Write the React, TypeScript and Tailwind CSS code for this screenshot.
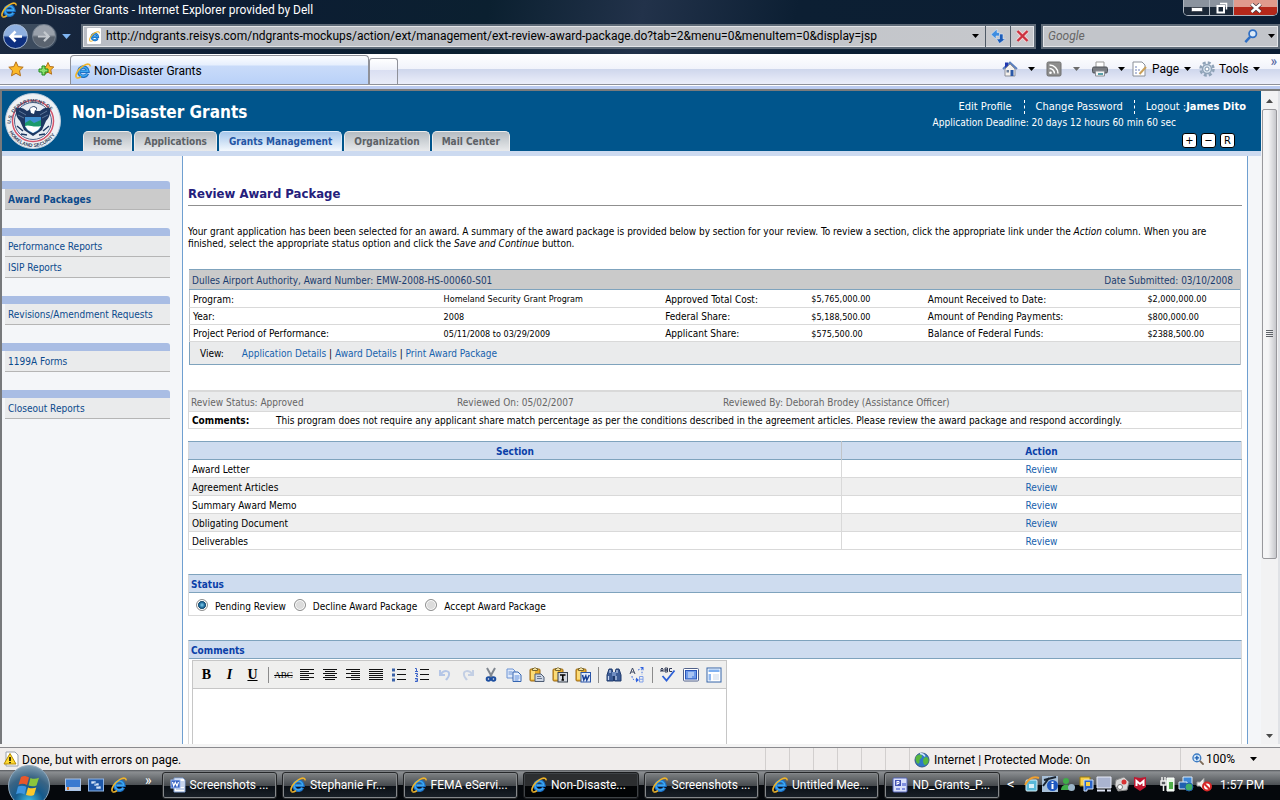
import React, { useState } from "react";

interface IconProps {
  size?: number;
  children: React.ReactNode;
}

const Icon: React.FC<IconProps> = ({ size = 16, children }) => (
  <svg width={size} height={size} viewBox="0 0 16 16" fill="none" className="shrink-0" aria-hidden="true">
    {children}
  </svg>
);

const IeLogo: React.FC<{ size?: number }> = ({ size = 16 }) => (
  <Icon size={size}>
    <path d="M12.6 10.6A4.6 4.6 0 1 1 13 8.4H5.4" stroke="#1b6fc4" strokeWidth="3.4" />
    <path d="M12.2 10.8A4.4 4.4 0 1 1 12.8 8.3H5.4" stroke="#3fa9f0" strokeWidth="1.4" />
    <path d="M1.6 14.6C-.6 12.4 3.2 5.6 8.6 2.6c4-2.2 6.8-1.8 6.4.8" stroke="#f0b429" strokeWidth="1.6" />
    <path d="M1.6 14.8c1.4.8 3-.2 4.4-1.2" stroke="#f0b429" strokeWidth="1.4" />
  </Icon>
);

const Caret: React.FC<{ className?: string }> = ({ className = "text-black" }) => (
  <svg width="7" height="4" viewBox="0 0 7 4" className={"shrink-0 " + className} aria-hidden="true">
    <path d="M0 0h7L3.500 4z" fill="currentColor" />
  </svg>
);

const Seal = () => (
  <svg width="58" height="58" viewBox="0 0 58 58" className="shrink-0" role="img" aria-label="Seal">
    <defs>
      <path id="sealTop" d="M6.500 33A22.500 22.500 0 1 1 51.500 33" />
      <path id="sealBottom" d="M3.500 34A26 26 0 0 0 54.500 34" />
    </defs>
    <circle cx="29" cy="29" r="27.500" fill="#eef1f5" stroke="#b9cadb" />
    <circle cx="29" cy="29" r="20.500" fill="#fff" stroke="#d2546a" strokeWidth="1.500" />
    <circle cx="29" cy="29" r="18.500" fill="#e8edf3" stroke="#4a648c" />
    <path d="M12 16c4-1 8 0 11 3l2-1c1-4 6-5 8-2v3l3 0c3-3 6-4 10-3 1 5-1 10-4 13l-4 9-9 6-9-6-4-9c-3-3-5-8-4-13z" fill="#1d3761" />
    <path d="M15 19l7 4M14 23l6 3M43 19l-7 4M44 23l-6 3" stroke="#5c7699" />
    <path d="M26 17c1-2 4-3 6-1l1 3-2-1-1 4-3-1z" fill="#fff" />
    <path d="M21 25h16v8c0 4-4 7-8 8-4-1-8-4-8-8z" fill="#3f8fd0" />
    <path d="M21 31l5-3 4 3 7-3v6l-3 4h-10l-3-4z" fill="#1a9a6a" />
    <path d="M21 34c4-2 8 2 16 0l-3 4-5 3-5-3z" fill="#fff" />
    <path d="M13 34l6 5M45 34l-6 5M17 42l6 1M41 42l-6 1" stroke="#1d3761" strokeWidth="1.500" />
    <text fill="#33475f" className="text-[5px] font-bold font-['Liberation_Sans',sans-serif]">
      <textPath href="#sealTop" startOffset="1">U.S. DEPARTMENT OF</textPath>
    </text>
    <text fill="#33475f" className="text-[5px] font-bold font-['Liberation_Sans',sans-serif]">
      <textPath href="#sealBottom" startOffset="6">HOMELAND SECURITY</textPath>
    </text>
  </svg>
);

const TitleBar = () => (
  <div className="h-[20px] flex items-start justify-between pl-[1px] pr-[2px]">
    <div className="flex items-center gap-[4px] h-[20px] text-white text-[12px]">
      <IeLogo />
      <span>Non-Disaster Grants - Internet Explorer provided by Dell</span>
    </div>
    <div className="flex h-[16px] rounded-b-[5px] border border-t-0 border-[#aeb6c0] overflow-hidden">
      <button aria-label="Minimize" className="w-[25px] flex items-center justify-center bg-linear-to-b from-[#8b939e] from-45% to-[#1b2838] to-50%">
        <svg width="12" height="5" className="mt-[4px]"><rect x=".5" y=".5" width="11" height="4" rx="1" fill="#fff" stroke="#4a4f58" /></svg>
      </button>
      <button aria-label="Restore" className="w-[25px] flex items-center justify-center border-x border-[#aeb6c0] bg-linear-to-b from-[#8b939e] from-45% to-[#1b2838] to-50%">
        <svg width="12" height="12" viewBox="0 0 12 12" fill="none">
          <path d="M4 1.500h6.500v6" stroke="#fff" strokeWidth="1.500" />
          <rect x="1.500" y="4" width="6.500" height="6.500" stroke="#fff" strokeWidth="2" />
        </svg>
      </button>
      <button aria-label="Close" className="w-[43px] flex items-center justify-center bg-linear-to-b from-[#e09b8d] from-45% to-[#b4281a] to-50%">
        <svg width="12" height="10" viewBox="0 0 12 10">
          <path d="M1.500 1l9 8M10.500 1l-9 8" stroke="#4a3a40" strokeWidth="4" />
          <path d="M1.500 1l9 8M10.500 1l-9 8" stroke="#fff" strokeWidth="2.400" />
        </svg>
      </button>
    </div>
  </div>
);

const AddressBar = () => (
  <div className="h-[34px] flex items-center pl-[3px] pb-[2px]">
    <div className="flex items-center w-[54px] h-[25px] rounded-full bg-[#3c4b5e]">
      <button aria-label="Back" className="size-[25px] rounded-full border border-[#a8bcd8] bg-linear-to-b from-[#8fb0e0] from-45% to-[#0d2f80] to-55% flex items-center justify-center">
        <svg width="15" height="13" viewBox="0 0 15 13" fill="none"><path d="M14 6.500H3M7.500 1.500l-5 5 5 5" stroke="#fff" strokeWidth="2.600" /></svg>
      </button>
      <button aria-label="Forward" className="ml-[4px] size-[24px] rounded-full border border-[#75808e] bg-linear-to-b from-[#9aa1ab] from-45% to-[#5a636f] to-55% flex items-center justify-center">
        <svg width="14" height="13" viewBox="0 0 15 13" fill="none"><path d="M1 6.500h11M7.500 1.500l5 5-5 5" stroke="#c3c8ce" strokeWidth="2.400" /></svg>
      </button>
    </div>
    <Caret className="ml-[5px] text-[#7fb4f0] w-[9px] h-[5px]" />
    <div className="ml-[10px] flex-1 min-w-0 h-[25px] flex items-center border-2 border-[#5f6b78] shadow-[inset_0_0_0_1px_#e4e6e9] bg-linear-to-r from-[#b9bdc4] to-[#c6c8cc]">
      <span className="ml-[4px] w-[14px] h-[16px] bg-white flex items-center justify-center rounded-[1px]">
        <IeLogo size={11} />
      </span>
      <input
        aria-label="Address"
        className="ml-[5px] flex-1 min-w-0 h-full bg-transparent text-black text-[12px] outline-none"
        defaultValue="http://ndgrants.reisys.com/ndgrants-mockups/action/ext/management/ext-review-award-package.do?tab=2&menu=0&menuItem=0&display=jsp"
      />
      <button aria-label="Show addresses" className="px-[5px]"><Caret /></button>
      <button aria-label="Refresh" className="w-[25px] h-full ml-[1px] border-l border-[#4f5a66] flex items-center justify-center">
        <Icon>
          <path d="M7 1L1 6.500 6 11V8H9.500V4.500H7z" fill="#3f8de0" stroke="#dce9f8" strokeWidth=".6" />
          <path d="M9.500 15.500L15.500 11H13V6h-3.500v5H6.500z" fill="#1c5cb8" stroke="#dce9f8" strokeWidth=".6" />
        </Icon>
      </button>
      <button aria-label="Stop" className="w-[24px] h-full border-l border-[#4f5a66] flex items-center justify-center">
        <svg width="13" height="12" viewBox="0 0 13 12"><path d="M1.500 1l10 10M11.500 1l-10 10" stroke="#f4d4d4" strokeWidth="4" /><path d="M1.500 1l10 10M11.500 1l-10 10" stroke="#cc3340" strokeWidth="2.400" /></svg>
      </button>
    </div>
    <div className="ml-[5px] w-[239px] h-[25px] flex items-center border-2 border-[#5f6b78] shadow-[inset_0_0_0_1px_#e4e6e9] bg-[#c2c5ca]">
      <input
        aria-label="Search"
        placeholder="Google"
        className="ml-[5px] flex-1 min-w-0 bg-transparent text-[12px] italic placeholder:text-[#666] outline-none"
      />
      <button aria-label="Search" className="mr-[10px]">
        <Icon size={14}>
          <circle cx="10" cy="5.500" r="4.200" fill="#dceaf8" stroke="#2f6fc4" strokeWidth="2" />
          <path d="M7 9l-5.500 6" stroke="#2f6fc4" strokeWidth="2.800" />
        </Icon>
      </button>
      <button aria-label="Search options" className="mr-[3px]"><Caret /></button>
    </div>
  </div>
);

const CommandBar = () => (
  <div className="h-[31px] flex items-end bg-[linear-gradient(#fff_0,#f1f3fb_15px,#ced6ec_15px,#eceefa_30px)] border-b border-[#8f9199]">
    <div className="flex w-[70px] h-[31px] items-center pl-[8px] gap-[14px]">
      <button aria-label="Favorites">
        <Icon><path d="M8 .8l2.200 4.800 5 .6-3.700 3.500 1 5.100L8 12.300l-4.500 2.500 1-5.100L.8 6.200l5-.6z" fill="#fbb829" stroke="#b3711d" /></Icon>
      </button>
      <button aria-label="Add to favorites">
        <Icon>
          <path d="M10 1.500l1.800 4 4 .4-3 3 .8 4.300-3.600-2-3.700 2 .9-4.300-3-3 4-.4z" fill="#fbb829" stroke="#b3711d" />
          <path d="M4 5h3v3h3v3H7v3H4v-3H1V8h3z" fill="#8be070" stroke="#1d8a1d" />
        </Icon>
      </button>
    </div>
    <div className="h-[29px] w-[299px] flex items-center gap-[3px] pl-[4px] pt-[2px] rounded-t-[4px] border border-b-0 border-[#8f9199] bg-[linear-gradient(#fcfdff_0,#e6effd_9px,#c9dbf9_10px,#b9d1f8_28px)] text-black text-[12px]">
      <IeLogo />
      <span>Non-Disaster Grants</span>
    </div>
    <button aria-label="New tab" className="h-[26px] w-[29px] border border-b-0 border-[#8f9199] rounded-t-[3px] bg-[linear-gradient(#fff_0,#eef1fa_11px,#dadff2_11px,#e9ecf8_25px)]" />
    <div className="flex-1" />
    <div className="h-[30px] flex items-center pr-[3px] text-black text-[12px]">
      <button className="flex items-center gap-[10px]" aria-label="Home">
        <Icon>
          <path d="M1 8L8 1.500 15 8" stroke="#5b7fbe" strokeWidth="2" />
          <path d="M3 8l5-5 5 5v7H3z" fill="#f5f1ec" stroke="#8b8f9a" />
          <path d="M3 1.500h3v3L3 7z" fill="#2138b0" />
          <path d="M8.500 9h3v6h-3z" fill="#2a58a8" /><path d="M4.500 9h2.500v2.500H4.500z" fill="#6c7f9c" />
        </Icon>
        <Caret />
      </button>
      <button className="ml-[11px] flex items-center gap-[11px]" aria-label="Feeds">
        <Icon>
          <rect x="1" y="1" width="14" height="14" rx="1.500" fill="#8d8d8d" stroke="#6f6f6f" />
          <circle cx="4.500" cy="11.800" r="1.300" fill="#fff" />
          <path d="M3.500 7.500a5 5 0 0 1 5 5M3.500 4a8.500 8.500 0 0 1 8.500 8.500" stroke="#fff" strokeWidth="1.500" />
        </Icon>
        <Caret className="text-[#6b6b6b]" />
      </button>
      <button className="ml-[12px] flex items-center gap-[10px]" aria-label="Print">
        <Icon>
          <path d="M4 1h8v6H4z" fill="#fff" stroke="#999" />
          <rect x=".5" y="6" width="15" height="6" rx="1.500" fill="#777b82" stroke="#4e5258" />
          <path d="M3.500 10h9v5h-9z" fill="#f4f4f4" stroke="#8d9096" /><path d="M6 12h5v2H6z" fill="#5a9fa8" />
        </Icon>
        <Caret />
      </button>
      <button className="ml-[7px] flex items-center">
        <Icon>
          <path d="M1 1h9l3 3v11H1z" fill="#fff" stroke="#8a8f98" />
          <path d="M3 6h3M3 9h5M3 12h3" stroke="#6d7fb8" strokeDasharray="2 1" />
          <path d="M7.500 13l6.500-7" stroke="#c9a05a" strokeWidth="2" />
        </Icon>
        <span className="ml-[4px]">Page</span>
        <Caret className="ml-[5px]" />
      </button>
      <button className="ml-[8px] flex items-center">
        <Icon>
          <circle cx="8" cy="8" r="6.500" stroke="#8fa3b8" strokeWidth="2.500" strokeDasharray="3 2.100" />
          <circle cx="8" cy="8" r="4.500" fill="#dbe6f0" stroke="#8fa3b8" strokeWidth="1.500" />
          <circle cx="8" cy="8" r="2" fill="#fff" stroke="#7b93ab" />
        </Icon>
        <span className="ml-[4px]">Tools</span>
        <Caret className="ml-[5px]" />
      </button>
      <span className="ml-[10px] self-start text-[14px] leading-[14px] text-[#4e5f9e]">»</span>
    </div>
  </div>
);

const tabs = ["Home", "Applications", "Grants Management", "Organization", "Mail Center"];

const PageHeader: React.FC = () => {
  const [active, setActive] = useState("Grants Management");
  return (
    <header className="h-[65px] shrink-0 flex bg-[#00558c] border-b-[5px] border-[#ccdaf0] text-white">
      <div className="pl-[2px] pt-[1px]"><Seal /></div>
      <div className="flex-1 min-w-0 flex flex-col justify-between pl-[10px]">
        <h1 className="pt-[11px] text-[17px] leading-[20px] font-bold">Non-Disaster Grants</h1>
        <nav className="flex items-end gap-[2px] pl-[11px]">
          {tabs.map((tab) => (
            <button
              key={tab}
              onClick={() => setActive(tab)}
              className={
                "h-[20px] px-[9px] rounded-t-[5px] border-t border-x font-bold text-[10px] whitespace-nowrap " +
                (tab === active
                  ? "border-[#dcebfa] bg-linear-to-b from-[#a5c6ea] to-[#f4f9fe] text-[#2355a4]"
                  : "border-[#ededed] bg-linear-to-b from-[#b5bcc2] to-[#e8eaec] text-[#5c6166]")
              }
            >
              {tab}
            </button>
          ))}
        </nav>
      </div>
      <div className="flex flex-col items-end text-[11px] pr-[15px] pt-[9px]">
        <div className="flex leading-[14px]">
          <a href="#profile" className="pr-[12px]">Edit Profile</a>
          <a href="#password" className="border-l border-dashed border-white px-[11px]">Change Password</a>
          <span className="border-l border-dashed border-white pl-[11px]">
            <a href="#logout">Logout</a> :<b>James Dito</b>
          </span>
        </div>
        <p className="mt-[3px] pr-[70px] text-[10px] leading-[12px]">Application Deadline: 20 days 12 hours 60 min 60 sec</p>
        <div className="mt-[4px] pr-[11px] flex gap-[4px] text-black text-[11px]">
          {["+", "−", "R"].map((label) => (
            <button key={label} className="size-[15px] rounded-[3px] border border-black bg-white leading-[12px] text-center">
              {label}
            </button>
          ))}
        </div>
      </div>
    </header>
  );
};

const menuGroups = [
  ["Award Packages"],
  ["Performance Reports", "ISIP Reports"],
  ["Revisions/Amendment Requests"],
  ["1199A Forms"],
  ["Closeout Reports"],
];

const Sidebar = () => (
  <aside className="w-[180px] shrink-0 bg-[#f4f6f9] pt-[25px] pr-[12px] flex flex-col gap-[18px]">
    {menuGroups.map((group) => (
      <ul key={group[0]}>
        <li className="h-[8px] bg-[#a9bde4] rounded-tr-[3px]" />
        {group.map((item) => (
          <li
            key={item}
            className={
              "ml-[3px] h-[21px] pl-[3px] border-b border-[#b5b5b5] leading-[22px] text-[10px] " +
              (item === "Award Packages" ? "bg-[#cbcbcb] font-bold" : "bg-[#eaebec]")
            }
          >
            <a href="#menu" className="text-[#0b4a8c]">{item}</a>
          </li>
        ))}
      </ul>
    ))}
  </aside>
);

const awardRows = [
  ["Program:", "Homeland Security Grant Program", "Approved Total Cost:", "$5,765,000.00", "Amount Received to Date:", "$2,000,000.00"],
  ["Year:", "2008", "Federal Share:", "$5,188,500.00", "Amount of Pending Payments:", "$800,000.00"],
  ["Project Period of Performance:", "05/11/2008 to 03/29/2009", "Applicant Share:", "$575,500.00", "Balance of Federal Funds:", "$2388,500.00"],
];

const AwardSummary = () => (
  <section className="mt-[19px] mx-[1px] border-r border-[#c0c4c8]">
    <div className="h-[21px] flex justify-between items-center pt-[2px] pl-[3px] pr-[7px] bg-[#cacaca] border-y border-[#7fa3bd] text-[#1b3c6e]">
      <span>Dulles Airport Authority, Award Number: EMW-2008-HS-00060-S01</span>
      <span>Date Submitted: 03/10/2008</span>
    </div>
    <table className="w-full table-fixed border-l border-[#c0c4c8]">
      <colgroup>
        <col className="w-[24%]" />
        <col className="w-[21%]" />
        <col className="w-[14%]" />
        <col className="w-[11%]" />
        <col className="w-[21%]" />
        <col className="w-[9%]" />
      </colgroup>
      <tbody>
        {awardRows.map((row) => (
          <tr key={row[0]} className="h-[17px] border-b border-[#d9d9d9]">
            {row.map((cell, i) => (
              <td key={cell} className={i % 2 ? "pt-[2px] pl-[2px] whitespace-nowrap text-[9px]" : "pt-[3px] pl-[3px] whitespace-nowrap"}>{cell}</td>
            ))}
          </tr>
        ))}
      </tbody>
    </table>
    <div className="h-[23px] flex items-center bg-[#eaebec] border-l border-b border-[#7fa3bd] pt-[2px] pl-[10px]">
      <span>View:</span>
      <span className="ml-[18px]">
        <a href="#application" className="text-[#1762ad]">Application Details</a> | <a href="#award" className="text-[#1762ad]">Award Details</a> |{" "}
        <a href="#print" className="text-[#1762ad]">Print Award Package</a>
      </span>
    </div>
  </section>
);

const ReviewStatus = () => (
  <section className="mt-[25px] border border-t-2 border-[#d9d9d9]">
    <div className="h-[20px] grid grid-cols-[266px_266px_1fr] items-center pt-[3px] pl-[2px] bg-[#eaebec] border-b border-[#d9d9d9] text-[#666]">
      <span>Review Status: Approved</span>
      <span>Reviewed On: 05/02/2007</span>
      <span>Reviewed By: Deborah Brodey (Assistance Officer)</span>
    </div>
    <div className="h-[16px] flex items-center pt-[2px] pl-[3px]">
      <b className="w-[84px]">Comments:</b>
      <span>This program does not require any applicant share match percentage as per the conditions described in the agreement articles. Please review the award package and respond accordingly.</span>
    </div>
  </section>
);

const sections = ["Award Letter", "Agreement Articles", "Summary Award Memo", "Obligating Document", "Deliverables"];

const SectionTable = () => (
  <table className="mt-[12px] w-full table-fixed border border-[#d9d9d9] border-t-[#7fa3bd]">
    <thead>
      <tr className="h-[18px] bg-[#cedcef] text-[#0a3fa8] border-b border-[#7fa3bd]">
        <th className="w-[62%] pt-[3px]">Section</th>
        <th className="w-[38%] pt-[3px] border-l border-[#c0c4c8]">Action</th>
      </tr>
    </thead>
    <tbody>
      {sections.map((section) => (
        <tr key={section} className="h-[18px] border-b border-[#d9d9d9] even:bg-[#efefef]">
          <td className="pt-[3px] pl-[3px]">{section}</td>
          <td className="pt-[3px] border-l border-[#d9d9d9] text-center">
            <a href="#review" className="text-[#1762ad]">Review</a>
          </td>
        </tr>
      ))}
    </tbody>
  </table>
);

const statuses = ["Pending Review", "Decline Award Package", "Accept Award Package"];

const StatusForm: React.FC = () => {
  const [status, setStatus] = useState(statuses[0]);
  return (
    <section className="mt-[24px] border border-[#d9d9d9] border-t-[#7fa3bd]">
      <h3 className="h-[18px] leading-[20px] pl-[2px] bg-[#cedcef] border-b border-[#7fa3bd] font-bold text-[#0a3fa8]">Status</h3>
      <div className="h-[22px] flex items-center pl-[7px] pt-[6px] gap-[8px]">
        {statuses.map((item) => (
          <label key={item} className="flex items-center gap-[7px]">
            <input
              type="radio"
              name="status"
              checked={status === item}
              onChange={() => setStatus(item)}
              className="appearance-none size-[12px] mb-[3px] rounded-full border border-[#8e8f8f] shadow-[inset_0_0_0_1px_#fff] bg-[#dcdcdc] checked:bg-[radial-gradient(circle_at_50%_50%,#7fd0f0_0,#155d8f_3px,#0b3c5c_4px,#e4e8ea_4px)]"
            />
            {item}
          </label>
        ))}
      </div>
    </section>
  );
};

const lines = (d: string) => <path d={d} stroke="#111" />;

const clipboard = (
  <>
    <rect x="1" y="2" width="10" height="12" rx="1" fill="#e9ad2c" stroke="#9a6a16" />
    <path d="M2 3.500h4v9H2z" fill="#fbdc7a" />
    <path d="M3.500 3.500v-2h1.500l1-1 1 1h1.500v2z" fill="#f4e3a4" stroke="#77662f" />
  </>
);

const tools = [
  { name: "Bold", icon: <span className="font-bold text-[14px]">B</span> },
  { name: "Italic", icon: <span className="font-bold italic text-[14px]">I</span> },
  { name: "Underline", icon: <span className="font-bold underline text-[14px]">U</span> },
  { name: "|1" },
  { name: "Strikethrough", icon: <span className="line-through text-[9px]">ABC</span> },
  { name: "Align left", icon: <Icon>{lines("M1 2.500h14M1 4.500h9M1 6.500h14M1 8.500h9M1 10.500h14M1 12.500h9")}</Icon> },
  { name: "Align center", icon: <Icon>{lines("M1 2.500h14M3 4.500h10M1 6.500h14M3 8.500h10M1 10.500h14M3 12.500h10")}</Icon> },
  { name: "Align right", icon: <Icon>{lines("M1 2.500h14M6 4.500h9M1 6.500h14M6 8.500h9M1 10.500h14M6 12.500h9")}</Icon> },
  { name: "Justify", icon: <Icon>{lines("M1 2.500h14M1 4.500h14M1 6.500h14M1 8.500h14M1 10.500h14M1 12.500h14")}</Icon> },
  {
    name: "Bullets",
    icon: (
      <Icon>
        {lines("M6 2.500h9M6 7.500h9M6 12.500h9")}
        <path d="M1 1.500h3v3H1zM1 6.500h3v3H1zM1 11.500h3v3H1z" fill="#3a62a8" />
      </Icon>
    ),
  },
  {
    name: "Numbering",
    icon: (
      <Icon>
        {lines("M6 2.500h9M6 7.500h9M6 12.500h9")}
        <path d="M1 1.500h1.500v3M1 4.500h3M1 6.500h2.500v1.500h-1v1.500H4M1 11.500h2.500v3H1M1.500 13h2" stroke="#3a62c8" />
      </Icon>
    ),
  },
  { name: "Undo", icon: <Icon><path d="M3 3v5h5M4 7c3-4 9-4 8 1-.3 2.500-2 3.500-3 5" stroke="#b5c6e6" strokeWidth="2" /></Icon> },
  { name: "Redo", icon: <Icon><path d="M13 3v5H8M12 7c-3-4-9-4-8 1 .3 2.500 2 3.500 3 5" stroke="#c3cfe4" strokeWidth="2" /></Icon> },
  {
    name: "Cut",
    icon: (
      <Icon>
        <path d="M4 1l5 9M12 1L7 10" stroke="#808790" strokeWidth="2" />
        <circle cx="5.500" cy="12" r="1.800" stroke="#1d4fa0" strokeWidth="2" />
        <circle cx="10.500" cy="12" r="1.800" stroke="#1d4fa0" strokeWidth="2" />
      </Icon>
    ),
  },
  {
    name: "Copy",
    icon: (
      <Icon>
        <path d="M1 2h6l2 2v7H1z" fill="#dfeafb" stroke="#6d93d4" />
        <path d="M2.500 5h4M2.500 7h4" stroke="#6d93d4" />
        <path d="M7 5h5l3 3v6.500H7z" fill="#e9f1fd" stroke="#3464b0" />
        <path d="M8.500 9h5M8.500 11h5M8.500 13h4" stroke="#5b8bdc" />
      </Icon>
    ),
  },
  { name: "Paste", icon: <Icon>{clipboard}<path d="M6 7h6l3 3v4.500H6z" fill="#cdd6e4" stroke="#4d5c74" /><path d="M8 9.500h4M8 11.500h5" stroke="#6b7890" /></Icon> },
  {
    name: "Paste as text",
    icon: <Icon>{clipboard}<rect x="6" y="5.500" width="9.500" height="9.500" fill="#d5dae2" stroke="#39424f" /><path d="M8 8h5.500M10.800 8v5M9.500 13h2.500" stroke="#000" strokeWidth="1.500" /></Icon>,
  },
  {
    name: "Paste from Word",
    icon: <Icon>{clipboard}<rect x="6" y="5.500" width="9.500" height="9.500" fill="#e4edfb" stroke="#2a55a8" /><path d="M7.500 8l1.300 5 2-4 1 4 2.500-5" stroke="#163f96" strokeWidth="1.500" /></Icon>,
  },
  { name: "|2" },
  {
    name: "Find",
    icon: (
      <Icon>
        <path d="M3 2h3l1.500 7v5H1V8zM10 2h3l2 6v6H8.500V9z" fill="#3d5d96" stroke="#1f3a6c" />
        <path d="M6 5h4v4H6z" fill="#6e8cc0" /><path d="M2.500 9v4M10 9v4M4 3v3M11 3v3" stroke="#c5d5f0" strokeWidth="1.200" />
      </Icon>
    ),
  },
  {
    name: "Replace",
    icon: (
      <Icon>
        <path d="M1 7l2.500-6L6 7M2 5h3" stroke="#3b4660" />
        <path d="M10.500 9.500v5.500h3.500v-5.500zM10.500 12.200H14" stroke="#7e9fea" />
        <path d="M9 3c2-1 3-1 4 0v5M3 9c0 3 1 4 5 4" stroke="#3f6fe0" strokeDasharray="1.500 1.500" />
        <path d="M11 0h3.500v3.500zM7 10.500l3 2.500-3 2.500z" fill="#2f62e0" />
      </Icon>
    ),
  },
  { name: "|3" },
  {
    name: "Spell check",
    icon: (
      <Icon>
        <path d="M1 5V2l1-1 1 1v3M1 3.500h2M5 1v4h2.500V3H5h2.500V1zM12 1.500H9.500v3H12" stroke="#333c58" />
        <path d="M2.500 9l4 4.500L14.500 3.500" stroke="#2c60d8" strokeWidth="1.800" />
      </Icon>
    ),
  },
  {
    name: "Full screen",
    icon: <Icon><rect x=".5" y="1.500" width="15" height="12.500" rx="1" fill="#fff" stroke="#51618a" /><rect x="2.500" y="3.500" width="11" height="8.500" fill="#6f9bea" stroke="#2a55b8" /><path d="M5 6h6M5 8h6M5 10h4" stroke="#e4edfb" /></Icon>,
  },
  {
    name: "Blocks",
    icon: <Icon><rect x="1" y="1" width="14" height="14" fill="#fff" stroke="#3464a8" /><path d="M2.500 2.500h11V5h-11z" fill="#7fb0f0" /><path d="M2.500 7H5v6.500H2.500z" fill="#8fb8f0" /><path d="M7 7h6v6H7z" fill="#e4ebf4" /></Icon>,
  },
];

const CommentsEditor = () => (
  <section className="mt-[24px] flex-1 flex flex-col border border-b-0 border-[#d9d9d9] border-t-[#7fa3bd]">
    <h3 className="h-[18px] shrink-0 leading-[20px] pl-[2px] bg-[#cedcef] border-b border-[#7fa3bd] font-bold text-[#0a3fa8]">Comments</h3>
    <div className="mt-[1px] ml-[3px] w-[535px] flex-1 flex flex-col border border-b-0 border-[#c6c6c6]">
      <div className="h-[28px] shrink-0 flex items-center pt-[2px] pl-[2px] bg-[#efefee] border-b border-[#c6c6c6] text-black font-['Liberation_Serif',serif]">
        {tools.map((tool) =>
          tool.icon ? (
            <button key={tool.name} type="button" aria-label={tool.name} className="w-[23px] h-[22px] flex items-center justify-center">
              {tool.icon}
            </button>
          ) : (
            <span key={tool.name} className="ml-[4px] mr-[3px] w-[1px] h-[16px] bg-[#8b8b8b]" />
          )
        )}
      </div>
      <textarea aria-label="Comments" className="flex-1 w-full resize-none bg-white outline-none" />
    </div>
  </section>
);

const ScrollBar = () => (
  <div className="w-[19px] shrink-0 flex flex-col items-center bg-[#f2f2f3] border-r-2 border-[#e0e2e6] pt-[1px]">
    <button aria-label="Scroll up" className="h-[17px] w-full flex items-center justify-center"><Caret className="rotate-180 text-[#4a4a4a]" /></button>
    <div className="w-[15px] h-[69%] rounded-[2px] border border-[#98989c] bg-linear-to-r from-[#f5f5f6] from-40% to-[#c6c7cb] flex flex-col justify-center items-center gap-[1px]">
      {[0, 1, 2, 3].map((n) => (
        <span key={n} className="w-[7px] h-[1px] bg-[#5f6368]" />
      ))}
    </div>
    <div className="flex-1" />
    <button aria-label="Scroll down" className="h-[17px] w-full flex items-center justify-center"><Caret className="text-[#4a4a4a]" /></button>
  </div>
);

const StatusBar = () => (
  <div className="h-[22px] shrink-0 flex items-center bg-[#f0edec] text-black text-[12px] pl-[3px]">
    <Icon>
      <path d="M3 1h9l3 3v11H3z" fill="#fff" stroke="#9aa2ad" />
      <path d="M7 2.500L13 13H1z" fill="#ffd92e" stroke="#b58a00" />
      <path d="M7 6v4M7 11v1.300" stroke="#000" strokeWidth="1.500" />
    </Icon>
    <span className="ml-[3px] pt-[2px] flex-1">Done, but with errors on page.</span>
    {[1, 2, 3, 4, 5, 6].map((n) => (
      <span key={n} className="w-[24px] h-full border-l border-[#d2cfce]" />
    ))}
    <div className="h-full w-[271px] flex items-center gap-[4px] border-l border-[#d2cfce] pt-[1px] pl-[4px]">
      <Icon>
        <circle cx="8" cy="8" r="7" fill="#2f78c8" stroke="#375a86" />
        <path d="M3 3.500c3-2 5-1 5 1S5 7 5.500 9s-1 3-2 2.500S0 6 3 3.500zM10 6c3-2 4-.5 4.500 2s-2 5-3.500 5-3-5-1-7z" fill="#58b83e" />
        <path d="M6 1.500c2 0 4 1 5 3" stroke="#cfe4f8" strokeWidth="1.500" />
      </Icon>
      <span>Internet | Protected Mode: On</span>
    </div>
    <div className="h-full w-[100px] flex items-center border-l border-[#d2cfce] pl-[11px]">
      <Icon size={12}>
        <circle cx="6.500" cy="6.500" r="5.200" fill="#d8ebfb" stroke="#3d7cc4" strokeWidth="1.800" />
        <path d="M6.500 3.500v6M3.500 6.500h6" stroke="#1a5cb0" strokeWidth="1.800" /><path d="M10.500 10.500l5 5" stroke="#7c6a58" strokeWidth="2.500" />
      </Icon>
      <span className="ml-[2px]">100%</span>
      <Caret className="ml-[15px]" />
    </div>
  </div>
);

const WordIcon = () => (
  <Icon>
    <path d="M4 1h9l2 2v12H4z" fill="#fff" stroke="#7d9bd0" />
    <path d="M10 5h4M10 7h4M10 9h4M6 12h8" stroke="#8fa8d4" />
    <rect x="1" y="3" width="9" height="8" fill="#3560c0" stroke="#9cb8ee" />
    <path d="M2.500 5l1.200 4 1.600-3.500L7 9l1.500-4" stroke="#fff" strokeWidth="1.200" />
  </Icon>
);

const PptIcon = () => (
  <Icon>
    <rect x="1" y="1" width="14" height="14" rx="1" fill="#d7defa" stroke="#5564b8" />
    <path d="M3 3h6v6H3z" fill="#4453b4" />
    <path d="M5 4v4M5 4.500h2v2H5" stroke="#fff" /><path d="M10 6h4v3h-4zM4 11h4v2H4zM10 11h3v2h-3z" fill="#7f8ee0" />
  </Icon>
);

const tasks = [
  { label: "Screenshots ...", icon: <WordIcon /> },
  { label: "Stephanie Fr...", icon: <IeLogo /> },
  { label: "FEMA eServi...", icon: <IeLogo /> },
  { label: "Non-Disaste...", icon: <IeLogo />, active: true },
  { label: "Screenshots  ...", icon: <IeLogo /> },
  { label: "Untitled Mee...", icon: <IeLogo /> },
  { label: "ND_Grants_P...", icon: <PptIcon /> },
];

const TaskBar = () => (
  <div className="h-[30px] shrink-0 flex items-center bg-[linear-gradient(#55585c_0,#8b8e91_2px,#4c5054_15px,#05080c_15px,#05080c_30px)] text-white text-[12px]">
    <button aria-label="Start" className="ml-[8px] -mt-[4px] -mb-[6px] size-[42px] shrink-0 rounded-full border border-[#8fa9bf] bg-[radial-gradient(circle_at_50%_90%,#3fc0e8_0,#155a8c_35%,#3a6484_60%,#9db5c4_100%)] flex items-center justify-center">
      <svg width="28" height="26" viewBox="0 0 28 26" aria-hidden="true">
        <path d="M6 4c3-1.500 5-1 8 .5L12 12c-3-1.500-5.500-1.500-8.500-.3z" fill="#e8572a" />
        <path d="M15.500 5c3 1.300 5.500 1 8.500-.2L21.500 12.500c-3 1.200-5 1-8 0z" fill="#8cc63c" />
        <path d="M3 13.500c3-1.200 5.500-1 8.500.3L9.500 21.500c-3-1.500-5.500-1.500-8.500-.3z" fill="#3d95e0" />
        <path d="M13 14.500c3 1.200 5.500 1 8.300 0L19 22c-3 1.200-5 1-8 0z" fill="#fcc92c" />
      </svg>
    </button>
    <div className="ml-[15px] flex items-center gap-[7px]">
      <Icon><rect x=".5" y="2" width="15" height="11.500" fill="#3a7bd0" stroke="#a9c4e8" /><path d="M1 10h14v3H1z" fill="#b8cbe4" /><path d="M2 10h2v3H2z" fill="#e07a2c" /></Icon>
      <Icon><rect x=".5" y="2" width="15" height="12" fill="#1f58a8" stroke="#8fb4e4" /><path d="M3 4h5v3H3zM6 6h5v3H6zM8 9h5v3H8z" fill="#d6e5f8" stroke="#1f58a8" strokeWidth=".6" /></Icon>
      <IeLogo />
    </div>
    <span className="ml-[18px] mb-[10px] text-[14px] leading-[14px]">»</span>
    <div className="ml-[10px] flex flex-1 min-w-0 gap-[5px]">
      {tasks.map((task, i) => (
        <button
          key={i}
          className={
            "h-[27px] flex-1 min-w-0 max-w-[116px] flex items-center gap-[4px] pl-[7px] whitespace-nowrap rounded-[3px] border " +
            (task.active
              ? "border-[#1a1c1e] shadow-[inset_0_0_0_1px_#3f4347] bg-linear-to-b from-[#2c2e30] from-50% to-[#020406] to-50%"
              : "border-[#26282a] shadow-[inset_0_0_0_1px_#85888b] bg-[linear-gradient(#7f8284_0,#45494d_13px,#0b1016_13px,#1c232b_27px)]")
          }
        >
          {task.icon}
          {task.label}
        </button>
      ))}
    </div>
    <div className="ml-[5px] mb-[3px] flex items-center gap-[2px] w-[275px] shrink-0 text-[12px]">
      <span className="w-[17px] pl-[2px] text-[15px] leading-[16px]">&lt;</span>
      <Icon><rect x="2" y="4" width="11" height="11" rx="1" fill="#58b8d8" stroke="#d8f0f8" /><path d="M1 9C5 2 10 0 15 2" stroke="#f0a030" strokeWidth="2" /><path d="M5 8h5v4H5z" fill="#d8f0f8" /></Icon>
      <Icon><path d="M0 0h16v16H0z" fill="#a8c0d8" /><path d="M1 10l6-8M2 4l12-3" stroke="#1a2430" strokeWidth="2" /><circle cx="10.500" cy="9.500" r="5.500" fill="#1f58c0" /><path d="M10.500 8v5M10.500 5.500v1.500" stroke="#fff" strokeWidth="2" /></Icon>
      <Icon><circle cx="6" cy="5" r="3" fill="#3fae49" /><path d="M1 14c0-7 10-7 10 0z" fill="#3fae49" /><circle cx="11.500" cy="11.500" r="3.500" fill="#9bb4c8" /></Icon>
      <Icon><path d="M2 1h10v9H2z" fill="#f8d048" stroke="#9a7a10" /><path d="M6 4h9v9H9v2H6z" fill="#2a64c8" stroke="#cfe0f8" /><path d="M8 6h4v4H8z" fill="#f8d048" /></Icon>
      <Icon><path d="M1 1h14v11H1z" fill="#aab4d0" stroke="#e8ecf8" /><path d="M1 14.500h8M11 14.500h4" stroke="#dfe4f4" strokeWidth="2" /></Icon>
      <Icon><path d="M2 4l8-3 5 5-2 8-9 1-3-6z" fill="#d8d8d8" stroke="#888" /><circle cx="10" cy="6" r="2.500" fill="#d83030" /><circle cx="6" cy="11" r="2.500" fill="#fff" stroke="#777" /></Icon>
      <Icon><path d="M2 1l6 1 6-1v10l-6 4-6-4z" fill="#c01830" /><path d="M4.500 10V5L8 8l3.500-3v5" stroke="#fff" strokeWidth="2" /></Icon>
      <span className="w-[8px]" />
      <Icon><path d="M7 2h7v13H7z" fill="#e8f8e8" stroke="#fff" /><path d="M9 6h4v7H9z" fill="#4fae4a" /><path d="M2 1v4M5 1v4M1 5h5v4H1zM3.500 9v6" stroke="#eee" strokeWidth="1.500" /></Icon>
      <Icon><path d="M5 1h9v8H5z" fill="#3f88d8" stroke="#e0ecf8" /><path d="M1 6h8v7H1z" fill="#2060b0" stroke="#e0ecf8" /><circle cx="11" cy="11" r="4" fill="#3fae6a" stroke="#1f5ca8" /></Icon>
      <Icon><path d="M1 6h3l4-4v12l-4-4H1z" fill="#eee" stroke="#999" /><circle cx="11" cy="10.500" r="4" fill="#fff" stroke="#d82828" strokeWidth="2" /><path d="M8.500 8l5 5" stroke="#d82828" strokeWidth="2" /></Icon>
      <span className="ml-[6px] mt-[2px] whitespace-nowrap">1:57 PM</span>
    </div>
  </div>
);

const App: React.FC = () => {
  return (
    <div className="h-screen overflow-hidden flex flex-col bg-white font-[Roboto,sans-serif]">
      <div className="shrink-0 bg-[linear-gradient(100deg,#1a2940_0,#0c1d33_20%,#0b2030_38%,#22324a_50%,#0c1f33_62%,#0b1d33_100%)]">
        <TitleBar />
        <AddressBar />
      </div>
      <CommandBar />
      <div className="h-[6px] shrink-0 bg-[#bccbf0] border-t border-[#fff] border-b-2 border-b-[#7b7b7b]" />
      <div className="flex-1 min-h-0 flex border-l-2 border-[#77797c] font-['DejaVu_Sans_Condensed','DejaVu_Sans',sans-serif]">
        <div className="flex-1 min-w-0 flex flex-col">
          <PageHeader />
          <div className="flex-1 min-h-0 flex">
            <Sidebar />
            <main className="flex-1 min-w-0 flex flex-col overflow-hidden px-[5px] border-x border-[#6f9fd0] text-black text-[10px] leading-[12px]">
              <h2 className="mt-[28px] h-[22px] shrink-0 leading-[20px] text-[13px] font-bold text-[#25207c] border-b border-[#8f8f8f]">Review Award Package</h2>
              <p className="mt-[20px]">
                Your grant application has been been selected for an award. A summary of the award package is provided below by section for your review. To review a section, click the appropriate link under the{" "}
                <i>Action</i> column. When you are finished, select the appropriate status option and click the <i>Save and Continue</i> button.
              </p>
              <AwardSummary />
              <ReviewStatus />
              <SectionTable />
              <StatusForm />
              <CommentsEditor />
            </main>
            <div className="w-[13px] shrink-0 bg-[#f4f6f9]" />
          </div>
        </div>
        <ScrollBar />
      </div>
      <div className="h-[4px] shrink-0 bg-[#f4f4f4] border-b border-[#8a8a8e]" />
      <StatusBar />
      <TaskBar />
    </div>
  );
};

export default App;
